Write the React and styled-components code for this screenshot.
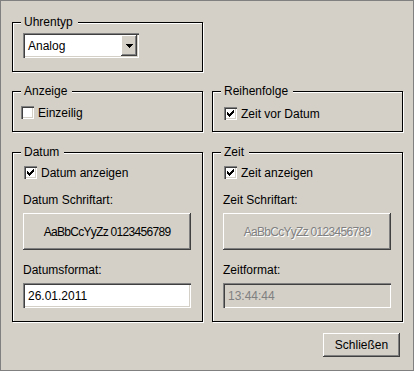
import React from 'react';
import styled, { createGlobalStyle } from 'styled-components';

const Global = createGlobalStyle`
  body {
    margin: 0;
    background: #d4d0c8;
    font-family: "Liberation Sans", Arial, sans-serif;
    font-size: 12px;
    color: #000;
  }
`;

const Window = styled.div`
  width: 414px;
  height: 371px;
  box-sizing: border-box;
  border: 1px solid #808080;
  padding: 21px 10px 0 11px;
  background: #d4d0c8;
  display: grid;
  grid-template-columns: 191px 191px;
  column-gap: 9px;
  align-content: start;
  align-items: start;
`;

const Group = styled.div`
  grid-column: ${p => p.$col};
  height: ${p => p.$h}px;
  margin-top: ${p => p.$mt || 0}px;
  box-sizing: border-box;
  border: 1px solid #000;
  box-shadow: 1px 1px 0 #fff, inset 1px 1px 0 #fff;
  padding: 0 10px;
  display: flex;
  flex-direction: column;
  align-items: flex-start;
`;

const Caption = styled.span`
  margin: -8px 0 0 -2px;
  padding: 0 5px 0 3px;
  background: #d4d0c8;
  line-height: 14px;
`;

const Sunken = `
  border: none;
  box-sizing: border-box;
  box-shadow: inset 1px 1px 0 #808080, inset 2px 2px 0 #404040,
    inset -1px -1px 0 #fff, inset -2px -2px 0 #d4d0c8;
`;

const Raised = `
  border: none;
  box-sizing: border-box;
  background: #d4d0c8;
  box-shadow: inset -1px -1px 0 #404040, inset 1px 1px 0 #fff,
    inset -2px -2px 0 #808080, inset 2px 2px 0 #d4d0c8;
`;

const Select = styled.div`
  ${Sunken}
  width: 116px;
  height: 25px;
  margin-top: 4px;
  background: #fff;
  display: flex;
  align-items: center;
  padding: 2px 2px 2px 5px;
  line-height: 14px;
`;

const SelectText = styled.span`
  flex: 1;
`;

const ArrowButton = styled.span`
  ${Raised}
  width: 16px;
  height: 21px;
  display: flex;
  align-items: center;
  justify-content: center;
`;

const CheckRow = styled.label`
  display: flex;
  align-items: center;
  gap: 4px;
  height: 15px;
  line-height: 14px;
  margin-top: ${p => p.$mt}px;
  margin-left: ${p => p.$indent ?? 1}px;
`;

const Box = styled.span`
  ${Sunken}
  width: 13px;
  height: 13px;
  background: #fff;
  display: flex;
  align-items: center;
  justify-content: center;
`;

const FieldLabel = styled.span`
  line-height: 14px;
  margin-top: 13px;
`;

const FontButton = styled.button`
  ${Raised}
  width: 168px;
  height: 37px;
  margin-top: 6px;
  font: 12px "Liberation Sans", Arial, sans-serif;
  letter-spacing: -0.7px;
  color: #000;
  padding: 0;

  &:disabled {
    color: #808080;
    text-shadow: 1px 1px 0 #fff;
  }
`;

const Field = styled.div`
  ${Sunken}
  width: 168px;
  height: 25px;
  margin-top: 6px;
  padding: 0 5px;
  display: flex;
  align-items: center;
  line-height: 14px;
  background: ${p => (p.$disabled ? '#d4d0c8' : '#fff')};
  color: ${p => (p.$disabled ? '#808080' : '#000')};
`;

const CloseButton = styled.button`
  ${Raised}
  grid-column: 1 / -1;
  justify-self: end;
  width: 77px;
  height: 24px;
  margin: 11px 3px 0 0;
  font: 12px "Liberation Sans", Arial, sans-serif;
  color: #000;
  padding: 0;
`;

const Check = ({ checked }) => (
  <Box>
    {checked && (
      <svg width="7" height="7" viewBox="0 0 7 7" shapeRendering="crispEdges">
        <path
          fill="#000"
          d="M6 0h1v3h-1v1h-1v1h-1v1h-1v1h-1v-1h-1v-1h-1v-3h1v1h1v1h1v-1h1v-1h1z"
        />
      </svg>
    )}
  </Box>
);

const CheckBox = ({ checked, label, mt, indent }) => (
  <CheckRow $mt={mt} $indent={indent}>
    <Check checked={checked} />
    <span>{label}</span>
  </CheckRow>
);

export default function App() {
  return (
    <>
      <Global />
      <Window>
        <Group $col="1" $h={50}>
          <Caption>Uhrentyp</Caption>
          <Select>
            <SelectText>Analog</SelectText>
            <ArrowButton>
              <svg width="7" height="4" viewBox="0 0 7 4" shapeRendering="crispEdges">
                <path fill="#000" d="M0 0h7v1h-1v1h-1v1h-1v1h-1v-1h-1v-1h-1v-1h-1z" />
              </svg>
            </ArrowButton>
          </Select>
        </Group>

        <Group $col="1" $h={41} $mt={19}>
          <Caption>Anzeige</Caption>
          <CheckBox label="Einzeilig" mt={7} indent={-2} />
        </Group>
        <Group $col="2" $h={41} $mt={19}>
          <Caption>Reihenfolge</Caption>
          <CheckBox label="Zeit vor Datum" checked mt={8} />
        </Group>

        <Group $col="1" $h={170} $mt={20}>
          <Caption>Datum</Caption>
          <CheckBox label="Datum anzeigen" checked mt={6} />
          <FieldLabel>Datum Schriftart:</FieldLabel>
          <FontButton>AaBbCcYyZz 0123456789</FontButton>
          <FieldLabel>Datumsformat:</FieldLabel>
          <Field>26.01.2011</Field>
        </Group>
        <Group $col="2" $h={170} $mt={20}>
          <Caption>Zeit</Caption>
          <CheckBox label="Zeit anzeigen" checked mt={6} />
          <FieldLabel>Zeit Schriftart:</FieldLabel>
          <FontButton disabled>AaBbCcYyZz 0123456789</FontButton>
          <FieldLabel>Zeitformat:</FieldLabel>
          <Field $disabled>13:44:44</Field>
        </Group>

        <CloseButton>Schließen</CloseButton>
      </Window>
    </>
  );
}
